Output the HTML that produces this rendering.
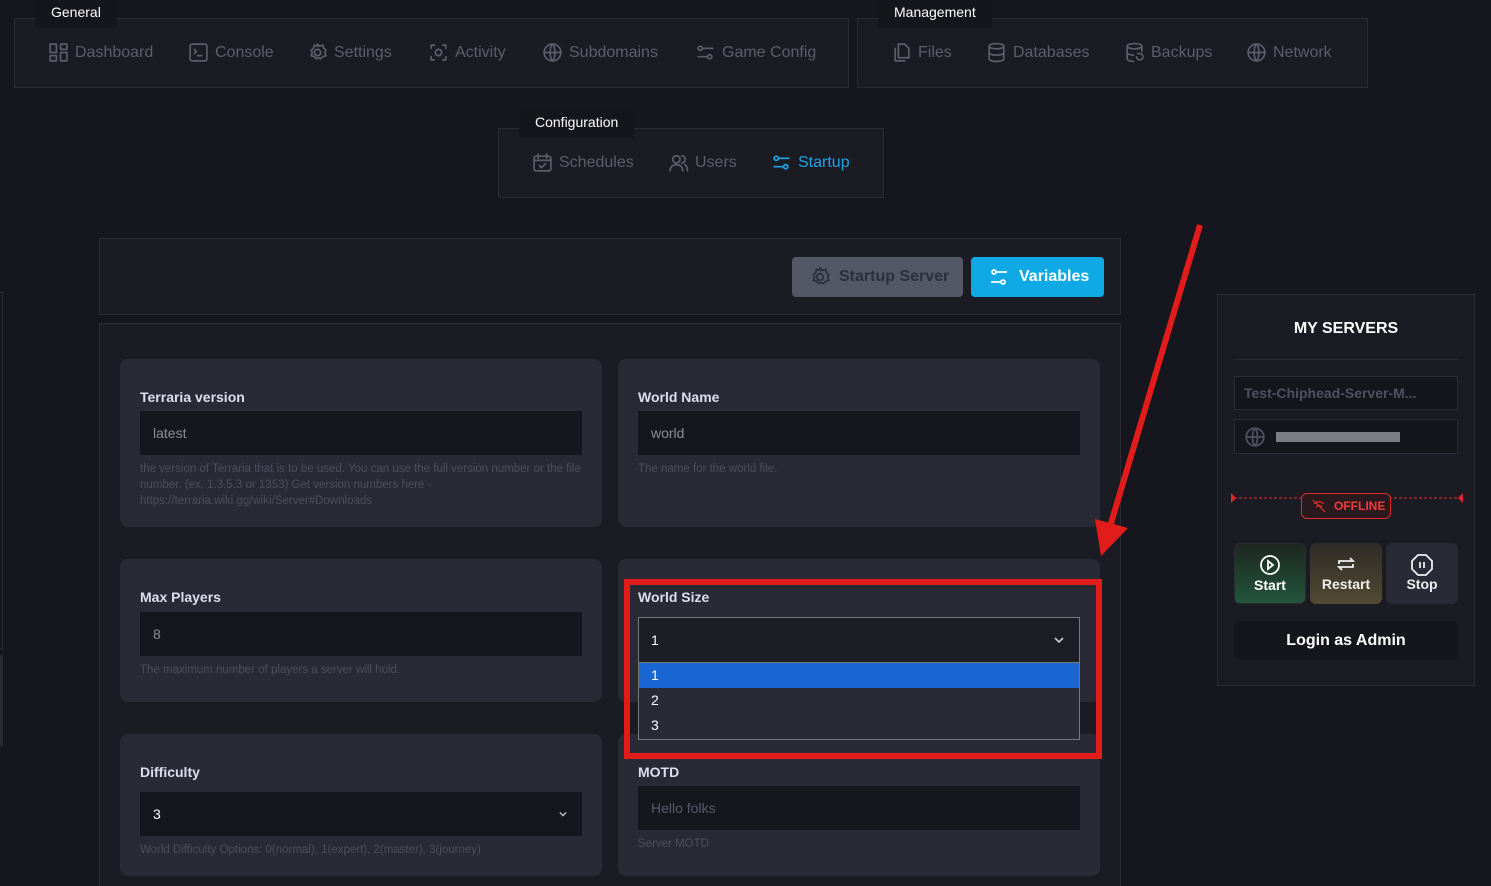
<!DOCTYPE html>
<html><head><meta charset="utf-8"><style>
*{box-sizing:border-box;margin:0;padding:0}
html{width:1491px;height:886px;overflow:hidden}
body{width:1491px;height:886px;overflow:hidden;background:#16161e;font-family:"Liberation Sans",sans-serif;position:relative;color:#fff}
.a{position:absolute}
.grp{position:absolute;border:1px solid #2b2b36;background:#1b1b24}
.lbl{position:absolute;background:#15151c;color:#fff;font-size:14px;padding:4px 16px 8px}
.nav{position:absolute;display:flex;align-items:center;gap:6px;color:#5b5e6b;font-size:16px}
.nav svg{width:21px;height:21px;fill:none;stroke:currentColor;stroke-width:1.6;stroke-linecap:round;stroke-linejoin:round}
.card{position:absolute;background:#2a2a37;border-radius:8px}
.card h4{position:absolute;left:20px;font-size:14px;color:#dde;font-weight:bold}
.inp{position:absolute;left:20px;right:20px;height:44px;background:#16161e;color:#8a8d99;font-size:14px;padding:0 13px;line-height:44px}
.help{position:absolute;left:20px;right:20px;font-size:11.5px;color:#4b4e5b;line-height:16px}
</style></head><body>
<div class="a" style="left:0;top:292px;width:3px;height:358px;border:1px solid #2b2b36;border-left:none"></div>
<div class="a" style="left:0;top:655px;width:3px;height:91px;background:#2a2a37"></div>

<div class="grp" style="left:14px;top:18px;width:835px;height:70px"></div>
<div class="lbl" style="left:35px;top:0">General</div>
<div class="nav" style="left:48px;top:42px"><svg viewBox="0 0 20 20"><rect x="2" y="2" width="6" height="8"/><rect x="12" y="2" width="6" height="5"/><rect x="2" y="13" width="6" height="5"/><rect x="12" y="10" width="6" height="8"/></svg>Dashboard</div>
<div class="nav" style="left:188px;top:42px"><svg viewBox="0 0 20 20"><rect x="2" y="2" width="16" height="16" rx="2"/><path d="M6 7l2 2-2 2M9 13h4"/></svg>Console</div>
<div class="nav" style="left:307px;top:42px"><svg viewBox="0 0 20 20"><circle cx="10" cy="10" r="3"/><path d="M10 2l2 2 3-1 1 3 2 2-1 2 1 3-3 1-2 2-2-1-2 1-2-2-3-1 1-3-1-2 2-2 1-3 3 1z"/></svg>Settings</div>
<div class="nav" style="left:428px;top:42px"><svg viewBox="0 0 20 20"><path d="M3 6V3h3M14 3h3v3M17 14v3h-3M6 17H3v-3"/><circle cx="10" cy="10" r="3"/></svg>Activity</div>
<div class="nav" style="left:542px;top:42px"><svg viewBox="0 0 20 20"><circle cx="10" cy="10" r="8"/><path d="M2 10h16M10 2c3 3 3 13 0 16M10 2c-3 3-3 13 0 16"/></svg>Subdomains</div>
<div class="nav" style="left:695px;top:42px"><svg viewBox="0 0 20 20"><circle cx="5" cy="6" r="2"/><circle cx="14" cy="14" r="2"/><path d="M7 6h10M3 14h9"/></svg>Game Config</div>

<div class="grp" style="left:857px;top:18px;width:511px;height:70px"></div>
<div class="lbl" style="left:878px;top:0">Management</div>
<div class="nav" style="left:891px;top:42px"><svg viewBox="0 0 20 20"><path d="M7 2h6l4 4v9H7z M4 6v12h9"/></svg>Files</div>
<div class="nav" style="left:986px;top:42px"><svg viewBox="0 0 20 20"><ellipse cx="10" cy="4" rx="7" ry="2.5"/><path d="M3 4v12c0 1.5 3 2.5 7 2.5s7-1 7-2.5V4M3 10c0 1.5 3 2.5 7 2.5s7-1 7-2.5"/></svg>Databases</div>
<div class="nav" style="left:1124px;top:42px"><svg viewBox="0 0 20 20"><ellipse cx="10" cy="4" rx="7" ry="2.5"/><path d="M3 4v12c0 1.5 3 2.5 6 2.5M17 4v5M3 10c0 1.5 3 2.5 6 2.5M12 14a3 3 0 1 0 3-3h-2"/></svg>Backups</div>
<div class="nav" style="left:1246px;top:42px"><svg viewBox="0 0 20 20"><circle cx="10" cy="10" r="8"/><path d="M2 10h16M10 2c3 3 3 13 0 16M10 2c-3 3-3 13 0 16"/></svg>Network</div>

<div class="grp" style="left:498px;top:128px;width:386px;height:70px"></div>
<div class="lbl" style="left:519px;top:110px">Configuration</div>
<div class="nav" style="left:532px;top:152px"><svg viewBox="0 0 20 20"><rect x="2" y="4" width="16" height="14" rx="2"/><path d="M2 8h16M6 2v4M14 2v4M7 13l2 2 4-4"/></svg>Schedules</div>
<div class="nav" style="left:668px;top:152px"><svg viewBox="0 0 20 20"><circle cx="8" cy="7" r="3.5"/><path d="M2 18c0-4 3-6 6-6s6 2 6 6M13 3.5a3.5 3.5 0 0 1 0 7M16 12c1.5 1 2.5 3 2.5 6"/></svg>Users</div>
<div class="nav" style="left:771px;top:152px;color:#1ea4e8"><svg viewBox="0 0 20 20"><circle cx="5" cy="6" r="2"/><circle cx="14" cy="14" r="2"/><path d="M7 6h10M3 14h9"/></svg>Startup</div>

<div class="grp" style="left:99px;top:238px;width:1022px;height:77px"></div>
<div class="a" style="left:792px;top:257px;width:171px;height:40px;background:#545766;border-radius:4px;color:#2d2f3a;font-weight:bold;font-size:16px;display:flex;align-items:center;gap:8px;padding-left:17px"><svg width="22" height="22" viewBox="0 0 20 20" fill="none" stroke="#2d2f3a" stroke-width="1.6"><circle cx="10" cy="10" r="3"/><path d="M10 2l2 2 3-1 1 3 2 2-1 2 1 3-3 1-2 2-2-1-2 1-2-2-3-1 1-3-1-2 2-2 1-3 3 1z"/></svg>Startup Server</div>
<div class="a" style="left:971px;top:257px;width:133px;height:40px;background:#0fa9e6;border-radius:4px;color:#fff;font-weight:bold;font-size:16px;display:flex;align-items:center;gap:10px;padding-left:18px"><svg width="20" height="20" viewBox="0 0 20 20" fill="none" stroke="#fff" stroke-width="1.8"><circle cx="5" cy="5" r="2"/><circle cx="14" cy="15" r="2"/><path d="M7 5h11M2 15h10"/></svg>Variables</div>

<div class="grp" style="left:99px;top:323px;width:1022px;height:563px;border-bottom:none"></div>

<div class="card" style="left:120px;top:359px;width:482px;height:168px">
<h4 style="top:30px">Terraria version</h4><div class="inp" style="top:52px">latest</div>
<div class="help" style="top:102px">the version of Terraria that is to be used. You can use the full version number or the file number. (ex. 1.3.5.3 or 1353) Get version numbers here - https://terraria.wiki.gg/wiki/Server#Downloads</div></div>
<div class="card" style="left:618px;top:359px;width:482px;height:168px">
<h4 style="top:30px">World Name</h4><div class="inp" style="top:52px">world</div>
<div class="help" style="top:102px">The name for the world file.</div></div>
<div class="card" style="left:120px;top:559px;width:482px;height:143px">
<h4 style="top:30px">Max Players</h4><div class="inp" style="top:53px">8</div>
<div class="help" style="top:103px">The maximum number of players a server will hold.</div></div>
<div class="card" style="left:618px;top:559px;width:482px;height:143px">
<h4 style="top:30px">World Size</h4></div>
<div class="card" style="left:120px;top:734px;width:482px;height:142px">
<h4 style="top:30px">Difficulty</h4><div class="inp" style="top:58px;color:#fff">3<svg class="a" style="right:14px;top:18px" width="10" height="8" viewBox="0 0 12 10" fill="none" stroke="#ccc" stroke-width="1.6"><path d="M2 3l4 4 4-4"/></svg></div>
<div class="help" style="top:108px">World Difficulty Options: 0(normal), 1(expert), 2(master), 3(journey)</div></div>
<div class="card" style="left:618px;top:734px;width:482px;height:142px">
<h4 style="top:30px">MOTD</h4><div class="inp" style="top:52px;color:#555a68">Hello folks</div>
<div class="help" style="top:102px">Server MOTD</div></div>

<div class="a" style="left:638px;top:617px;width:442px;height:46px;background:#1d1d26;border:1px solid #777;color:#fff;font-size:14px;line-height:44px;padding-left:12px">1<svg class="a" style="right:14px;top:17px" width="12" height="10" viewBox="0 0 12 10" fill="none" stroke="#ccc" stroke-width="1.6"><path d="M2 3l4 4 4-4"/></svg></div>
<div class="a" style="left:638px;top:663px;width:442px;height:77px;background:#2a2a37;border:1px solid #777;border-top:none;color:#fff;font-size:14px">
<div style="height:25px;background:#1a67d4;line-height:25px;padding-left:12px">1</div>
<div style="height:25px;line-height:25px;padding-left:12px">2</div>
<div style="height:25px;line-height:25px;padding-left:12px">3</div></div>
<div class="a" style="left:624px;top:579px;width:478px;height:180px;border:6px solid #e21b1b"></div>

<svg class="a" style="left:0;top:0" width="1491" height="886"><line x1="1200" y1="225" x2="1109" y2="530" stroke="#e21b1b" stroke-width="6"/><polygon points="1095,519 1128,528 1101,556" fill="#e21b1b"/></svg>

<div class="grp" style="left:1217px;top:294px;width:258px;height:392px"></div>
<div class="a" style="left:1217px;top:320px;width:258px;text-align:center;font-weight:bold;font-size:16px">MY SERVERS</div>
<div class="a" style="left:1234px;top:359px;width:224px;height:1px;background:#2b2b36"></div>
<div class="a" style="left:1234px;top:376px;width:224px;height:34px;background:#15151c;border:1px solid #2b2b36;color:#4d5160;font-weight:bold;font-size:14px;line-height:32px;padding-left:9px">Test-Chiphead-Server-M...</div>
<div class="a" style="left:1234px;top:419px;width:224px;height:35px;background:#15151c;border:1px solid #2b2b36"><svg class="a" style="left:9px;top:6px" width="22" height="22" viewBox="0 0 20 20" fill="none" stroke="#4d5160" stroke-width="1.6"><circle cx="10" cy="10" r="8"/><path d="M2 10h16M10 2c3 3 3 13 0 16M10 2c-3 3-3 13 0 16"/></svg><div class="a" style="left:41px;top:12px;width:124px;height:10px;background:#7c7d83"></div></div>
<svg class="a" style="left:1230px;top:490px" width="234" height="18"><line x1="4" y1="8" x2="230" y2="8" stroke="#e02a2a" stroke-dasharray="3,2"/><polygon points="1,3 6,8 1,13" fill="#e02a2a"/><polygon points="233,3 228,8 233,13" fill="#e02a2a"/></svg>
<div class="a" style="left:1301px;top:493px;width:90px;height:26px;background:#2a1a1e;border:1px solid #e02a2a;border-radius:6px;color:#f03a3a;font-weight:bold;font-size:12px;line-height:24px;padding-left:32px">OFFLINE<svg class="a" style="left:10px;top:5px" width="14" height="14" viewBox="0 0 14 14" fill="none" stroke="#e02a2a" stroke-width="1.2"><path d="M1 1l12 12M2 5c3-3 7-3 10 0M4 8c2-2 4-2 6 0"/></svg></div>
<div class="a" style="left:1234px;top:543px;width:72px;height:61px;border-radius:6px;background:linear-gradient(#1e2620,#22553c);border:1px solid #2b2b36;text-align:center;font-weight:bold;font-size:14px;padding-top:10px"><svg width="22" height="22" viewBox="0 0 22 22" fill="none" stroke="#fff" stroke-width="1.8"><circle cx="11" cy="11" r="9"/><path d="M9 7l5 4-5 4z"/></svg><div style="margin-top:-2px">Start</div></div>
<div class="a" style="left:1310px;top:543px;width:72px;height:61px;border-radius:6px;background:linear-gradient(#2e2b27,#524a32);text-align:center;font-weight:bold;font-size:14px;padding-top:10px;color:#eee"><svg width="22" height="22" viewBox="0 0 22 22" fill="none" stroke="#eee" stroke-width="1.8"><path d="M4 11V8h14l-3-3M18 11v3H4l3 3"/></svg><div style="margin-top:-2px">Restart</div></div>
<div class="a" style="left:1386px;top:543px;width:72px;height:61px;border-radius:6px;background:#2a2a37;text-align:center;font-weight:bold;font-size:14px;padding-top:10px;color:#eee"><svg width="24" height="24" viewBox="0 0 24 24" fill="none" stroke="#eee" stroke-width="1.8"><polygon points="8,2 16,2 22,8 22,16 16,22 8,22 2,16 2,8"/><path d="M10 9v6M14 9v6"/></svg><div style="margin-top:-4px">Stop</div></div>
<div class="a" style="left:1234px;top:621px;width:224px;height:39px;border-radius:6px;background:#15151c;text-align:center;line-height:39px;font-weight:bold;font-size:16px">Login as Admin</div>
</body></html>
